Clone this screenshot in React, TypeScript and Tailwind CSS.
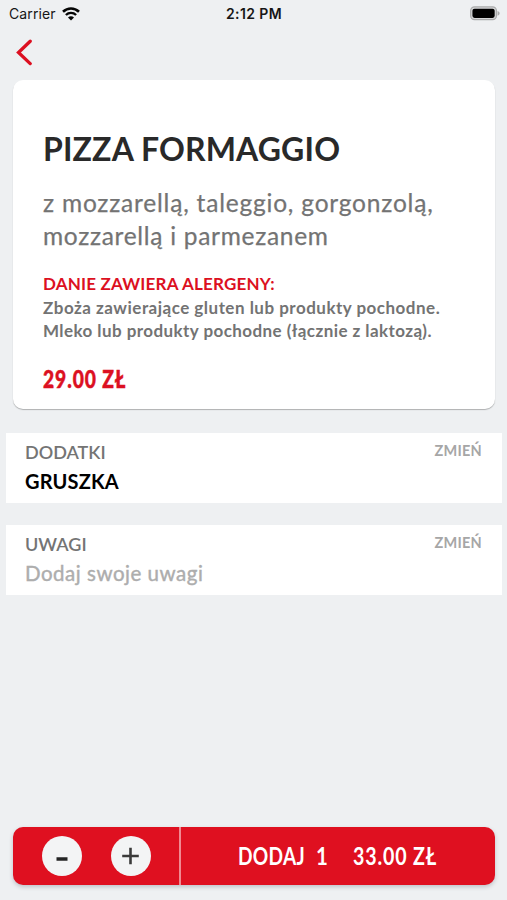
import React, { useState } from 'react';

function StatusBar() {
  return (
    <div className="grid h-7 grid-cols-3 items-center pb-px pl-[9px] pr-[7px] font-['Inter','Liberation_Sans',sans-serif] text-[14px] text-[#161616]">
      <div className="flex items-center gap-[6px]">
        <span className="tracking-[0.12px]">Carrier</span>
        <svg width="18" height="14" viewBox="0 0 18 14" fill="none" stroke="#050505">
          <path d="M1 4.8C5.6.4 12.4.4 17 4.8" strokeWidth="2.6" />
          <path d="M3.9 8C6.8 5.2 11.2 5.2 14.1 8" strokeWidth="2.4" />
          <path d="M9 13.4 6 10.4C7.7 8.8 10.3 8.8 12 10.4Z" fill="#050505" stroke="none" />
        </svg>
      </div>
      <span className="pr-px text-center font-semibold tracking-[0.4px]">2:12 PM</span>
      <svg className="justify-self-end" width="30" height="15" viewBox="0 0 31 15">
        <rect x="0.7" y="0.7" width="26.6" height="13.2" rx="4" fill="#d6d7d8" stroke="#a9aaab" strokeWidth="1.3" />
        <rect x="2.5" y="2.5" width="23" height="9.6" rx="2.2" fill="#000" />
        <path d="M28.5 4.8c2.8 1 2.8 4 0 5z" fill="#a9aaab" />
      </svg>
    </div>
  );
}

interface OptionRowProps {
  label: string;
  value: string;
  muted?: boolean;
}

function OptionRow({ label, value, muted }: OptionRowProps) {
  return (
    <section className="ml-[6px] mr-[5px] flex h-[70px] items-start justify-between bg-white pl-[19px] pr-5">
      <div className="flex flex-col">
        <h2 className="mt-[7px] text-[18px] font-semibold leading-6 text-[#747474]">{label}</h2>
        <p
          className={
            muted
              ? 'mt-[5px] text-[20.5px] leading-6 tracking-[0.52px] text-[#adadad] [-webkit-text-stroke:0.4px_#adadad]'
              : 'mt-[5px] text-[20px] font-bold leading-6 tracking-[0.15px] text-black'
          }
        >
          {value}
        </p>
      </div>
      <button className="mt-2 text-[14.5px] font-bold leading-5 tracking-[0.25px] text-[#a6a6a6]">ZMIEŃ</button>
    </section>
  );
}

export default function App() {
  const [count, setCount] = useState(1);

  return (
    <div className="flex h-[900px] w-[507px] flex-col overflow-hidden bg-[#eef0f2] font-['Lato','Open_Sans',sans-serif]">
      <StatusBar />

      <header className="flex h-[52px] items-start pl-4 pt-[11px]">
        <button aria-label="Wstecz">
          <svg width="17" height="27" viewBox="0 0 17 27" fill="none" stroke="#dc1021" strokeWidth="3.3" strokeLinecap="round">
            <path d="M14.2 2.2 2.5 13.5 14.2 24.6" />
          </svg>
        </button>
      </header>

      <main className="mr-3 ml-[13px] h-[329px] rounded-[10px] bg-white px-[30px] pt-[49px] shadow-[0_1px_1px_#aeb0b1]">
        <h1 className="whitespace-nowrap text-[32px] font-bold leading-10 tracking-[0.15px] text-[#292929]">PIZZA FORMAGGIO</h1>
        <p className="mt-[17px] whitespace-nowrap text-[24.5px] leading-[33px] tracking-[0.8px] text-[#737373] [-webkit-text-stroke:0.25px_#737373]">
          z mozzarellą, taleggio, gorgonzolą,
          <br />
          <span className="tracking-[0.7px]">mozzarellą i parmezanem</span>
        </p>
        <h3 className="mt-5 whitespace-nowrap text-[17px] font-bold leading-6 tracking-[0.2px] text-[#dc1021]">DANIE ZAWIERA ALERGENY:</h3>
        <p className="whitespace-nowrap text-[17px] font-bold leading-[23px] tracking-[0.49px] text-[#737373]">
          Zboża zawierające gluten lub produkty pochodne.
          <br />
          <span className="tracking-[0.43px]">Mleko lub produkty pochodne (łącznie z laktozą).</span>
        </p>
        <p className="mt-[20px] w-max origin-left scale-x-[0.77] whitespace-nowrap text-[25px] font-black leading-8 tracking-[1.2px] text-[#dc1021] [-webkit-text-stroke:0.5px_#dc1021]">
          29.00 ZŁ
        </p>
      </main>

      <div className="mt-6 flex flex-col gap-[22px]">
        <OptionRow label="DODATKI" value="GRUSZKA" />
        <OptionRow label="UWAGI" value="Dodaj swoje uwagi" muted />
      </div>

      <footer className="mr-3 mb-[15px] ml-[13px] mt-auto flex h-[58px] overflow-hidden rounded-[10px] bg-[#df1020] shadow-[0_2px_4px_#bfc3c8]">
        <div className="flex w-[168px] items-center gap-[29px] border-r-2 border-[#f08a92] pl-[29px]">
          <button
            aria-label="Mniej"
            onClick={() => setCount(Math.max(1, count - 1))}
            className="flex size-[40px] items-center justify-center rounded-full bg-[#f3f4f5]"
          >
            <svg width="20" height="20" viewBox="0 0 20 20" stroke="#242424" strokeWidth="3.6">
              <path d="M4.5 13h11" />
            </svg>
          </button>
          <button
            aria-label="Więcej"
            onClick={() => setCount(count + 1)}
            className="flex size-[40px] items-center justify-center rounded-full bg-[#f3f4f5]"
          >
            <svg width="20" height="20" viewBox="0 0 20 20" stroke="#3a3a3a" strokeWidth="2.6">
              <path d="M1.2 10h16.6M9.5 1.7v16.6" />
            </svg>
          </button>
        </div>
        <button className="flex flex-1 items-center pb-px pl-[57px] text-[25.5px] font-bold text-white">
          <span className="w-[78px] text-left"><span className="inline-block origin-left scale-x-[0.75] tracking-[0.4px]">DODAJ</span></span>
          <span className="w-[37px] text-left"><span className="inline-block origin-left scale-x-[0.8]">{count}</span></span>
          <span className="inline-block origin-left scale-x-[0.77] whitespace-nowrap tracking-[1.1px]">33.00 ZŁ</span>
        </button>
      </footer>
    </div>
  );
}
